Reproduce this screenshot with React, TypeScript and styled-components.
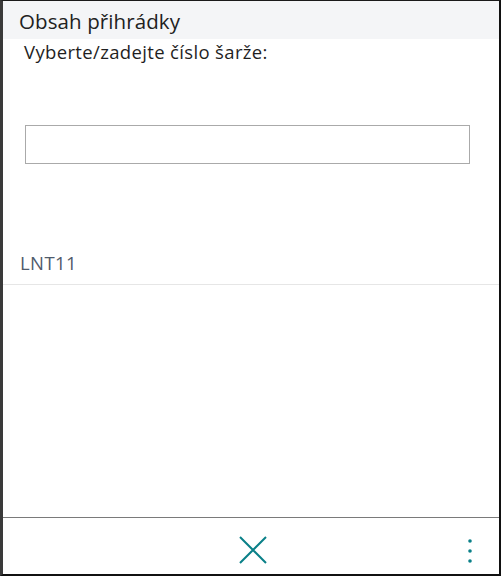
import React from "react";
import styled, { createGlobalStyle } from "styled-components";

const Global = createGlobalStyle`
  html, body { margin: 0; padding: 0; background: #fff; }
  body { font-family: "Open Sans", "Noto Sans", sans-serif; }
  * { box-sizing: border-box; }
`;

const Frame = styled.div`
  width: 501px;
  height: 576px;
  border-top: 1px solid #1a1a1a;
  border-left: 3px solid #3a3a3a;
  border-right: 2px solid #111;
  border-bottom: 2px solid #111;
  display: flex;
  flex-direction: column;
  background: #fff;
`;

const Header = styled.div`
  height: 38px;
  background: #f4f5f7;
  display: flex;
  align-items: center;
  padding: 2px 0 0 16px;
  font-size: 20.5px;
  letter-spacing: 0.1px;
  color: #212121;
`;

const Prompt = styled.div`
  padding: 0 0 0 21px;
  font-size: 18.5px;
  letter-spacing: 0.35px;
  color: #1f1f1f;
  height: 86px;
`;

const Input = styled.input`
  margin: 0 29px 0 22px;
  height: 39px;
  border: 1px solid #aaaaaa;
  outline: none;
  font-size: 16px;
  padding: 0 8px;
`;

const Lot = styled.div`
  margin-top: 84px;
  padding: 0 0 9px 17px;
  font-size: 18.5px;
  letter-spacing: 0.4px;
  color: #4f5b6c;
  border-bottom: 1px solid #e6e6e6;
  height: 37px;
  display: flex;
  align-items: flex-end;
`;

const Spacer = styled.div`
  flex: 1;
`;

const Footer = styled.div`
  height: 57px;
  padding-top: 8px;
  border-top: 1px solid #7a7a7a;
  display: flex;
  align-items: center;
  justify-content: center;
  position: relative;
`;

const IconButton = styled.button`
  background: none;
  border: none;
  padding: 0 0 0 3px;
  display: flex;
  cursor: pointer;
`;

const MoreButton = styled(IconButton)`
  position: absolute;
  right: 26px;
  top: 20px;
  padding: 0;
`;

export default function App() {
  return (
    <>
      <Global />
      <Frame>
        <Header>Obsah přihrádky</Header>
        <Prompt>Vyberte/zadejte číslo šarže:</Prompt>
        <Input />
        <Lot>LNT11</Lot>
        <Spacer />
        <Footer>
          <IconButton aria-label="Zavřít">
            <svg width="28" height="28" viewBox="0 0 28 28">
              <path d="M1 1 L27 27 M27 1 L1 27" stroke="#0a8088" strokeWidth="2" fill="none" />
            </svg>
          </IconButton>
          <MoreButton aria-label="Více">
            <svg width="6" height="26" viewBox="0 0 6 26">
              <circle cx="3" cy="3" r="1.8" fill="#0a8088" />
              <circle cx="3" cy="13" r="1.8" fill="#0a8088" />
              <circle cx="3" cy="23" r="1.8" fill="#0a8088" />
            </svg>
          </MoreButton>
        </Footer>
      </Frame>
    </>
  );
}
